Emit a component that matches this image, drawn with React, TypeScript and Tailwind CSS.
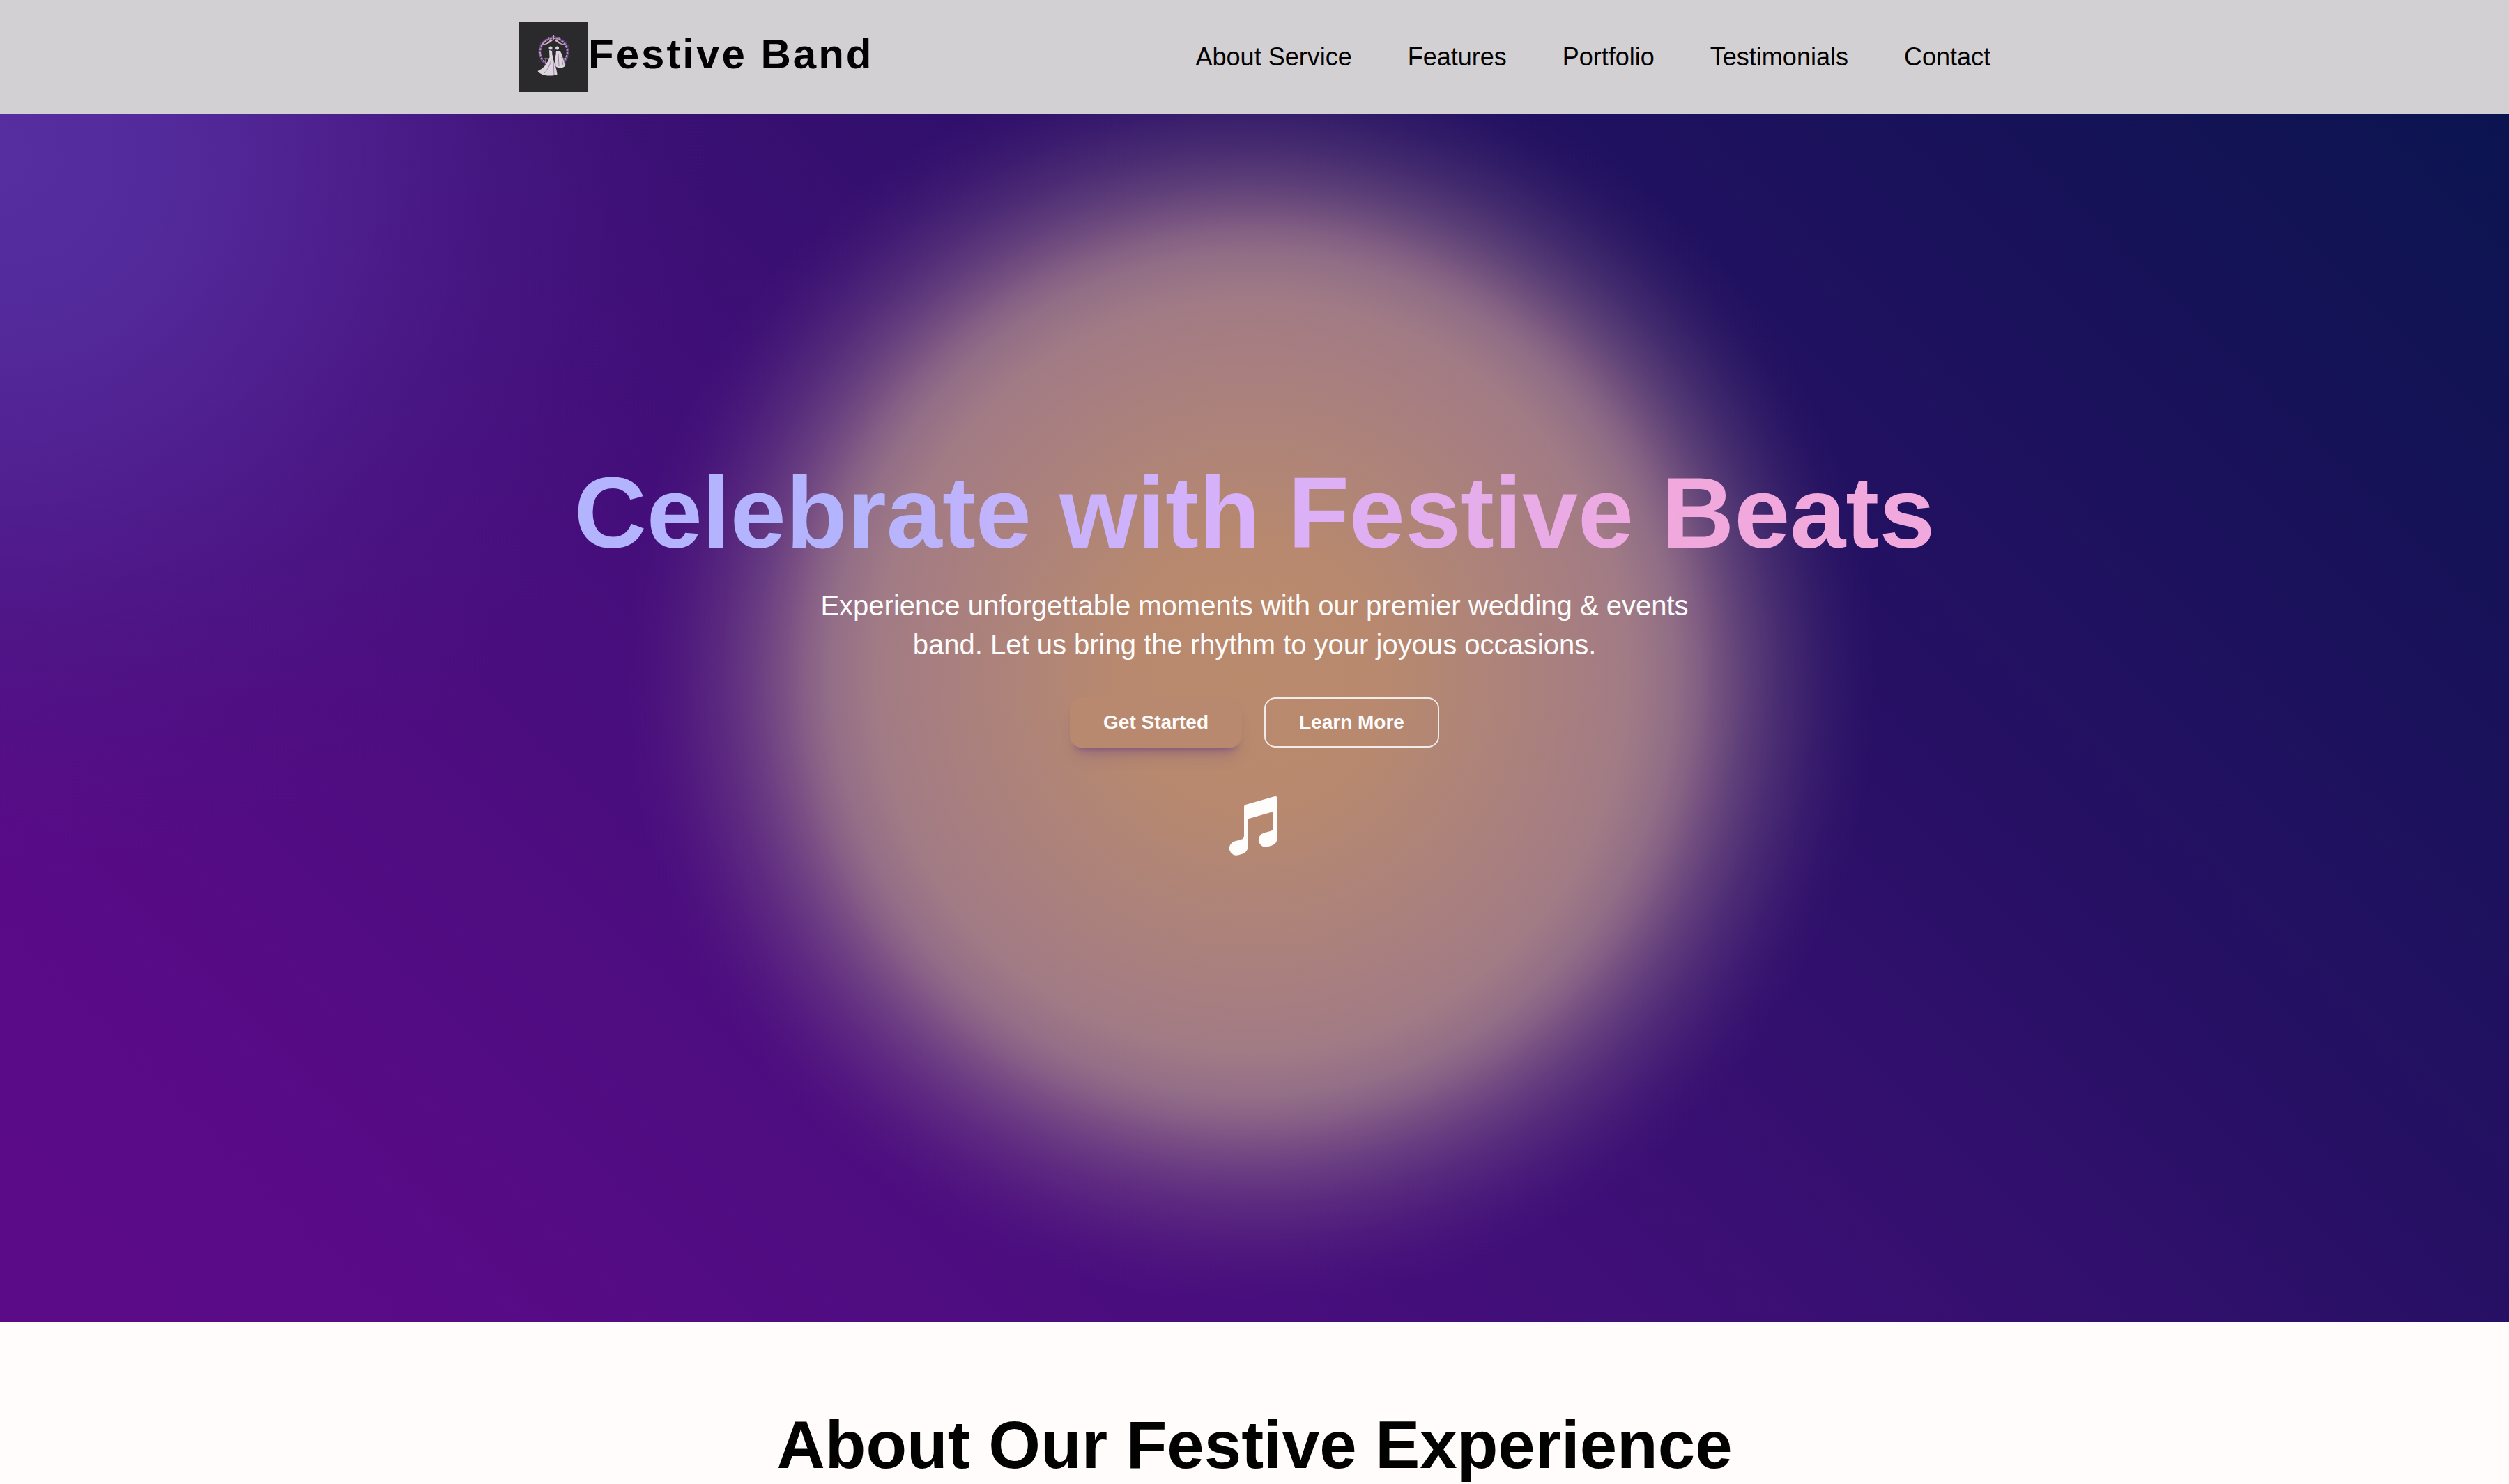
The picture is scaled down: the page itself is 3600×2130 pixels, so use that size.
import { HiMusicalNote } from 'react-icons/hi2';

const navLinks = ['About Service', 'Features', 'Portfolio', 'Testimonials', 'Contact'];

function Logo() {
  return (
    <svg viewBox="0 0 100 100" className="h-[100px] w-[100px] shrink-0 bg-[#2a292b]">
      {/* floral arch */}
      <circle cx="50.5" cy="42.5" r="20" fill="none" stroke="#6a4a92" strokeWidth="4" strokeDasharray="4 1" />
      <circle cx="50.5" cy="42.5" r="19.5" fill="none" stroke="#c09cb8" strokeWidth="2" strokeDasharray="3 1.5" />
      <path d="M33 32c8 1 14-3 17.500-8 3.500 5 9.500 9 17.500 8-7-1-11-4-12-7H45c-1 3-5 6-12 7z" fill="#d3b3bd" />
      <path d="M50.5 18v6M48.500 20h4M43 21v4M58 21v4" stroke="#c9a3b4" strokeWidth="1.2" />
      <path d="M31 30h1M68 28h1M71 34h1M30 56h1M69 56h1M67 60h1M33 61h1" stroke="#6b4a8e" strokeWidth="1.2" />
      <path d="M37 52h10v8M39 52v8M58 52h8" stroke="#c9a3b4" strokeWidth="1" fill="none" />
      {/* couple */}
      <circle cx="46" cy="37" r="2.5" fill="#ddd5dc" />
      <circle cx="55.5" cy="37" r="2.5" fill="#ddd5dc" />
      <path d="M44 40l4 1 1 9c2 8 6 17 6.500 25-7 2-15 2-21 0-2-1-5-2-7-5 9-4 14-11 17-20z" fill="#ddd5dc" />
      <path d="M54 41h6l3 8c2 6 3 10 3.500 14-3 3-8 3-12.500 1-2-6-1-16 0-23z" fill="#ddd5dc" />
      <path d="M47 52c-1 8-5 16-11 22M50 56l1 19M57 45l1 18M62 50l2 12" stroke="#8b6fa3" strokeWidth=".8" fill="none" />
      <path d="M49 39v8M52 39l1 8" stroke="#5b3d85" strokeWidth="1.2" />
    </svg>
  );
}

function Header() {
  return (
    <header className="relative z-10 h-[164px] bg-[#d2d0d3]">
      <div className="mx-auto flex h-full w-[2112px] items-center justify-between">
        <div className="flex items-center">
          <Logo />
          <span className="-mt-2 text-[60px] leading-none font-bold tracking-[3px]">Festive Band</span>
        </div>
        <nav className="flex gap-20 text-4xl">
          {navLinks.map((link) => (
            <a key={link} href="#">{link}</a>
          ))}
        </nav>
      </div>
    </header>
  );
}

function Hero() {
  return (
    <section className="relative flex h-[1734px] flex-col items-center overflow-hidden bg-[linear-gradient(45deg,#5c0b88_0%,#590b87_12%,#400f78_44%,#261064_68%,#0b1450_100%)] pt-[493px]">
      {/* background glows */}
      <div className="absolute inset-0 bg-[radial-gradient(circle_at_0px_60px,#562ea0_0px,#542c9dee_240px,#512695bb_480px,#4a1f8a70_700px,#4a1f8a20_880px,transparent_1020px)]" />
      <div className="absolute inset-0 bg-[radial-gradient(circle_at_1796px_806px,#b98a6c_0px,#b8896e_190px,#b08577_310px,#a97f7f_440px,#a17b85_540px,#987488f0_605px,#957089d4_640px,#957089a8_672px,#93708a78_712px,#93708a48_760px,#93708a20_815px,#93708a0a_860px,#93708a00_900px)]" />
      <h1 className="relative bg-linear-to-r from-[#b3b4fd] from-20% via-[#d9b1fa] to-[#f1a8dc] to-82% bg-clip-text text-[144px] leading-[160px] font-bold text-transparent">
        Celebrate with Festive Beats
      </h1>
      <p className="relative mt-6 w-[1344px] text-center text-[40px] leading-14 text-[#fffcfc]">
        Experience unforgettable moments with our premier wedding &amp; events band. Let us bring the rhythm to your joyous occasions.
      </p>
      <div className="relative mt-12 flex gap-8 text-[28px] leading-10 font-bold text-[#fffcfc]">
        <button className="h-[72px] rounded-2xl bg-[#b8896e] px-12 shadow-[0_20px_24px_-12px_#59338a50,0_10px_10px_-8px_#59338a80]">Get Started</button>
        <button className="h-[72px] rounded-2xl border-2 border-[#f3eaea] px-12">Learn More</button>
      </div>
      <HiMusicalNote className="relative mt-16 h-24 w-24 text-[#fffcfc]" />
    </section>
  );
}

export default function App() {
  return (
    <div className="h-[2130px] overflow-hidden bg-[#fffcfb] font-['Liberation_Sans',sans-serif] text-[#020203]">
      <Header />
      <Hero />
      <section className="pt-32 text-center">
        <h2 className="text-[96px] leading-[96px] font-bold">About Our Festive Experience</h2>
      </section>
    </div>
  );
}
